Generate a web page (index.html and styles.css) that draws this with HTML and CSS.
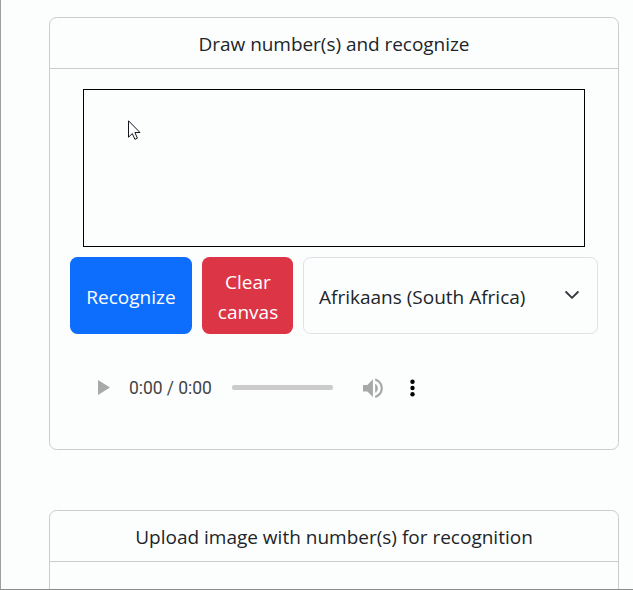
FILE: index.html
```html
<!DOCTYPE html>
<html lang="en">
<head>
<meta charset="utf-8">
<title>Number recognition</title>
<link rel="stylesheet" href="styles.css">
</head>
<body>
<main class="page">
  <section class="card card-draw">
    <header class="card-header"><span class="t-draw">Draw number(s) and recognize</span></header>
    <div class="card-body">
      <div class="canvas">
        <svg class="cursor" width="13" height="21" viewBox="0 0 13 21"><path d="M.5 .8V17.200L4.300 13.600L6.900 19.300L9.400 18.200L6.900 12.500H12Z" fill="#fff" stroke="#14141c" stroke-width="1"/></svg>
      </div>
      <div class="controls">
        <button class="btn btn-primary" type="button"><span class="t-rec">Recognize</span></button>
        <button class="btn btn-danger" type="button">Clear<br>canvas</button>
        <div class="select">
          <span class="t-select">Afrikaans (South Africa)</span>
          <svg width="18" height="18" viewBox="0 0 18 18"><path d="m3.100 6 5.900 5.900 5.900-5.900" fill="none" stroke="#343a40" stroke-width="1.900" stroke-linecap="round" stroke-linejoin="round"/></svg>
        </div>
      </div>
      <div class="audio">
        <svg class="play" width="12" height="15" viewBox="0 0 12 15"><path d="M0 0v15l12-7.500z" fill="#a8a8a8"/></svg>
        <span class="time">0:00 / 0:00</span>
        <span class="track"></span>
        <svg class="volume" width="20" height="20" viewBox="3 3 17 17"><path d="M3 9v6h4l5 5V4L7 9H3zm13.500 3c0-1.770-1.020-3.290-2.500-4.030v8.050c1.480-.73 2.500-2.250 2.500-4.020zM14 3.230v2.060c2.890.86 5 3.540 5 6.710s-2.110 5.850-5 6.710v2.060c4.010-.91 7-4.490 7-8.770s-2.990-7.860-7-8.770z" fill="#a8a8a8" transform="translate(.15 .4) scale(.94)"/></svg>
        <svg class="more" width="5" height="18" viewBox="0 0 5 18"><circle cx="2.500" cy="2.700" r="2.200"/><circle cx="2.500" cy="9" r="2.200"/><circle cx="2.500" cy="15.300" r="2.200"/></svg>
      </div>
    </div>
  </section>
  <section class="card card-upload">
    <header class="card-header"><span class="t-upload">Upload image with number(s) for recognition</span></header>
    <div class="card-body"></div>
  </section>
</main>
</body>
</html>
```
FILE: styles.css
```css
* { box-sizing: border-box; }
body { margin: 0; background: #fcfefe; color: #212529; font: 19px/30px "Open Sans", "Noto Sans", sans-serif; }
.page { height: 590px; overflow: hidden; padding: 17px 14px 0 48px; border-left: 1px solid #9e9e9e; border-bottom: 1px solid #8c8c8c; }
.card { border: 1px solid #cbcccc; border-radius: 7.5px; }
.card-draw { height: 433px; margin-bottom: 60px; }
.card-upload { height: 200px; }
.card-header { height: 51px; padding: 11px 20px 9px; border-bottom: 1px solid #cbcccc; text-align: center; white-space: nowrap; }
.t-draw { letter-spacing: -0.04px; }
.card-body { padding: 20px; }
.canvas { width: 502px; height: 158px; margin: 0 auto 10px; border: 1px solid #000; position: relative; }
.cursor { position: absolute; left: 44px; top: 30px; display: block; }
.controls { display: flex; gap: 10px; height: 77px; }
.btn { border: 0; border-radius: 7.5px; padding: 0; color: #fff; font: inherit; white-space: nowrap; }
.btn-primary { width: 122px; padding-top: 2px; background: #0d6efd; }
.btn-danger { width: 91px; background: #dc3545; padding: 2px 0 0 1px; }
.select { flex: 1; display: flex; align-items: center; justify-content: space-between; padding: 2px 16px 0 15px; border: 1px solid #dee2e6; border-radius: 7.5px; white-space: nowrap; }
.select svg { flex: none; margin-top: -3px; }
.audio { display: flex; align-items: center; width: 375px; height: 67px; margin-top: 20px; padding-left: 28px; }
.audio svg, .track { flex: none; }
.time { width: 83px; margin-left: 19px; color: #444; font: 17.500px/20px Roboto, sans-serif; letter-spacing: -0.05px; white-space: nowrap; }
.track { width: 101px; height: 5px; margin-left: 20px; border-radius: 2px; background: #cbcbcb; }
.volume { margin-left: 30px; }
.more { margin-left: 27px; }
```
